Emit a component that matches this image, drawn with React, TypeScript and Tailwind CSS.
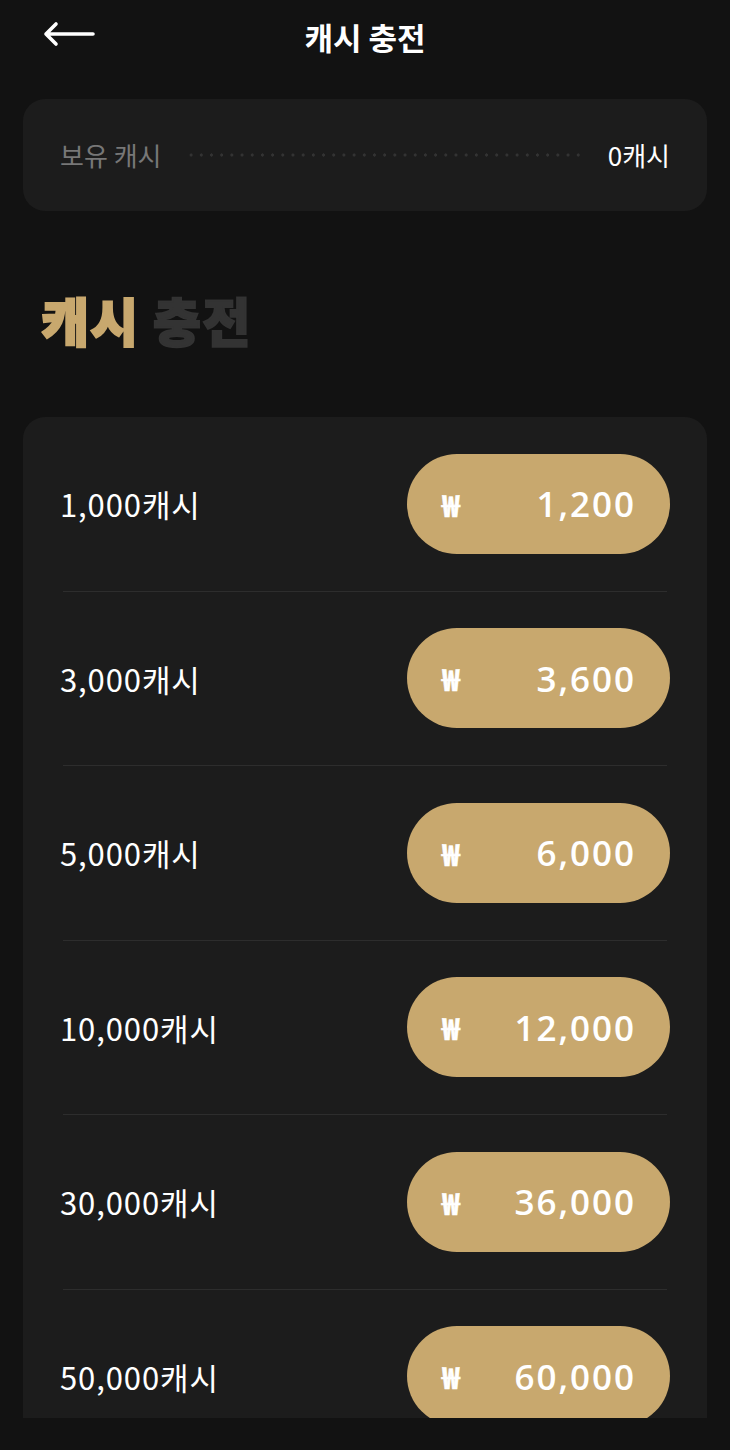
import React from "react";

const KR = "font-['Noto_Sans_CJK_KR','Noto_Sans',sans-serif]";

const packages = [
	{ cash: "1,000", price: "1,200" },
	{ cash: "3,000", price: "3,600" },
	{ cash: "5,000", price: "6,000" },
	{ cash: "10,000", price: "12,000" },
	{ cash: "30,000", price: "36,000" },
	{ cash: "50,000", price: "60,000" },
];

function BackArrow() {
	return (
		<svg width="54" height="26" viewBox="0 0 54 26" fill="none">
			<path
				d="M51 13H4M14 3L4 13L14 23"
				stroke="white"
				strokeWidth={3.6}
				strokeLinecap="round"
				strokeLinejoin="round"
			/>
		</svg>
	);
}

function PackageRow({ cash, price, last }: { cash: string; price: string; last: boolean }) {
	return (
		<div>
			<div className="h-[173.5px] px-[37px] flex items-center justify-between">
				<span className={`${KR} text-[31px] tracking-[0.9px] text-white leading-none`}>
					{cash}캐시
				</span>
				<button className="w-[263px] h-[100px] rounded-full bg-[#c8a86e] flex items-center justify-between pl-[35px] pr-[34px]">
					<span className={`${KR} text-[30px] font-bold text-white leading-none [-webkit-text-stroke:0.6px_white]`}>
						₩
					</span>
					<span className="font-['Open_Sans',sans-serif] text-[35px] font-semibold tracking-[2px] text-white leading-none">
						{price}
					</span>
				</button>
			</div>
			{!last && <div className="h-px mx-[40px] bg-[#2d2d2d]" />}
		</div>
	);
}

export default function App() {
	return (
		<div className={`${KR} w-[730px] h-[1450px] bg-[#121212] overflow-hidden`}>
			<header className="relative h-[72px] flex items-center justify-center">
				<div className="absolute left-[42px] top-[21px]">
					<BackArrow />
				</div>
				<h1 className="text-[31px] font-bold text-white leading-none">캐시 충전</h1>
			</header>

			<div className="mx-[23px] mt-[27px] h-[112px] rounded-[22px] bg-[#1c1c1c] px-[37px] flex items-center gap-[22px]">
				<span className="text-[26px] text-[#777777] leading-none">보유 캐시</span>
				<div className="flex-1 h-[4px] mx-[2px] bg-[radial-gradient(circle,#333333_1.4px,transparent_1.8px)] bg-[length:10.2px_4px] bg-repeat-x" />
				<span className="text-[26px] text-white leading-none">0캐시</span>
			</div>

			<h2 className="mt-[79px] ml-[41px] h-[60px] leading-[60px] text-[52px] font-black tracking-[1.5px] [-webkit-text-stroke:2px_currentColor]">
				<span className="text-[#c8a86e]">캐시</span>{" "}
				<span className="text-[#333333]">충전</span>
			</h2>

			<div className="mt-[67px] mx-[23px] h-[1001px] rounded-t-[22px] bg-[#1c1c1c] overflow-hidden">
				{packages.map((p, i) => (
					<PackageRow
						key={p.cash}
						cash={p.cash}
						price={p.price}
						last={i === packages.length - 1}
					/>
				))}
			</div>
		</div>
	);
}
